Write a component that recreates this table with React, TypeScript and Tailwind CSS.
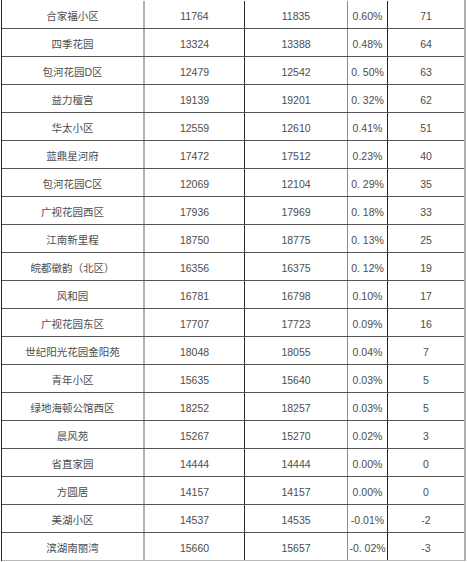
import React from 'react'

interface Row {
  name: string
  before: string
  after: string
  rate: string
  diff: string
}

const rows: Row[] = [
  { name: '合家福小区', before: '11764', after: '11835', rate: '0.60%', diff: '71' },
  { name: '四季花园', before: '13324', after: '13388', rate: '0.48%', diff: '64' },
  { name: '包河花园D区', before: '12479', after: '12542', rate: '0. 50%', diff: '63' },
  { name: '益力檀宫', before: '19139', after: '19201', rate: '0. 32%', diff: '62' },
  { name: '华太小区', before: '12559', after: '12610', rate: '0.41%', diff: '51' },
  { name: '蓝鼎星河府', before: '17472', after: '17512', rate: '0.23%', diff: '40' },
  { name: '包河花园C区', before: '12069', after: '12104', rate: '0. 29%', diff: '35' },
  { name: '广视花园西区', before: '17936', after: '17969', rate: '0. 18%', diff: '33' },
  { name: '江南新里程', before: '18750', after: '18775', rate: '0. 13%', diff: '25' },
  { name: '皖都徽韵（北区）', before: '16356', after: '16375', rate: '0. 12%', diff: '19' },
  { name: '风和园', before: '16781', after: '16798', rate: '0.10%', diff: '17' },
  { name: '广视花园东区', before: '17707', after: '17723', rate: '0.09%', diff: '16' },
  { name: '世纪阳光花园金阳苑', before: '18048', after: '18055', rate: '0.04%', diff: '7' },
  { name: '青年小区', before: '15635', after: '15640', rate: '0.03%', diff: '5' },
  { name: '绿地海顿公馆西区', before: '18252', after: '18257', rate: '0.03%', diff: '5' },
  { name: '晨风苑', before: '15267', after: '15270', rate: '0.02%', diff: '3' },
  { name: '省直家园', before: '14444', after: '14444', rate: '0.00%', diff: '0' },
  { name: '方圆居', before: '14157', after: '14157', rate: '0.00%', diff: '0' },
  { name: '美湖小区', before: '14537', after: '14535', rate: '-0.01%', diff: '-2' },
  { name: '滨湖南丽湾', before: '15660', after: '15657', rate: '-0. 02%', diff: '-3' },
]

export default function App() {
  return (
    <div
      className="w-[467px] h-[562px] bg-white text-[#4d4d4d] text-[10.5px] leading-none"
      style={{ fontFamily: '"Liberation Sans", "Noto Sans CJK SC", sans-serif' }}
    >
      <div className="ml-px w-[465px] pt-px border-l border-l-[#2a2a2a] border-r-2 border-r-[#b0b0b0]">
        {rows.map((r, i) => (
          <div
            key={r.name}
            className={`flex h-[28px] border-b ${i === rows.length - 1 ? 'border-[#b8b8b8]' : 'border-[#555]'}`}
          >
            <div className="w-[143px] flex items-center justify-center pt-[3px] border-r-2 border-[#b4b4b4]">
              {r.name}
            </div>
            <div className="w-[100px] flex items-center justify-center pt-[3px] border-r border-[#2a2a2a]">
              {r.before}
            </div>
            <div className="w-[103px] flex items-center justify-center pt-[3px] border-r border-[#8c8c8c]">
              {r.after}
            </div>
            <div className="w-[40px] flex items-center justify-center pt-[3px] border-r border-[#222]">
              {r.rate}
            </div>
            <div className="flex-1 flex items-center justify-center pt-[3px]">{r.diff}</div>
          </div>
        ))}
      </div>
    </div>
  )
}
